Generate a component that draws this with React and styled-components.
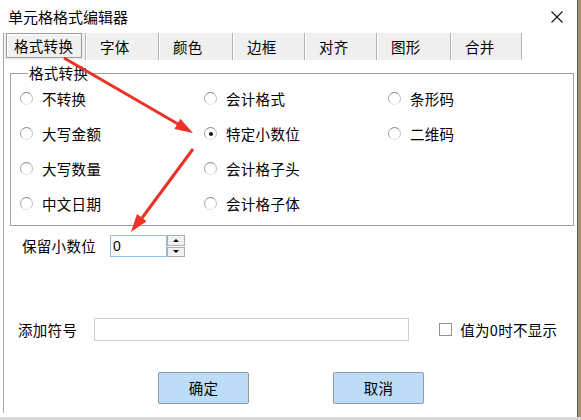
import React from "react";
import styled, { createGlobalStyle } from "styled-components";

const Global = createGlobalStyle`
  html, body { margin: 0; padding: 0; }
  body {
    background: #d6d6d6;
    font-family: "Noto Sans CJK SC", "Noto Sans", sans-serif;
    color: #000;
    width: 581px;
    height: 420px;
    overflow: hidden;
  }
`;

const Window = styled.div`
  position: relative;
  width: 577px;
  height: 417px;
  background: #fff;
  box-shadow: 1px 0 0 #5a5a5a, 4px 0 0 #a8916f;
  display: flex;
  flex-direction: column;
`;

const TitleBar = styled.div`
  height: 33px;
  flex: none;
  display: flex;
  align-items: center;
  justify-content: space-between;
  padding: 0 14px 0 8px;
  font-size: 15px;
  line-height: 16px;
`;

const Close = styled.svg`
  width: 12px;
  height: 12px;
  margin-top: 1px;
`;

const TabArea = styled.div`
  flex: 1;
  margin-left: 3px;
  margin-bottom: 4px;
  border-left: 1px solid #a8a8a8;
  display: flex;
  flex-direction: column;
`;

const TabRow = styled.div`
  height: 27px;
  display: flex;
  align-items: stretch;
`;

const Tab = styled.div`
  width: ${(p) => p.$w}px;
  box-sizing: border-box;
  background: #f0f0f0;
  border-right: 1px solid #b4b4b4;
  margin-right: 1px;
  display: flex;
  align-items: center;
  padding-left: ${(p) => (p.$active ? 0 : 13)}px;
  font-size: 14.5px;
  letter-spacing: 0.3px;
  line-height: 16px;
`;

const ActiveLabel = styled.span`
  margin: 0 3px 0 2px;
  align-self: stretch;
  margin-bottom: 2px;
  flex: 1;
  border: 1px solid #9a9a9a;
  box-shadow: inset 1px 1px 0 #fff;
  display: flex;
  align-items: center;
  padding-left: 7px;
`;

const Content = styled.div`
  flex: 1;
  display: flex;
  flex-direction: column;
`;

const Group = styled.fieldset`
  margin: 5px 3px 0 6px;
  padding: 0 0 4px 10px;
  border: 1px solid #a0a0a0;
  box-shadow: inset 1px 1px 0 #fff;
  display: grid;
  grid-template-columns: 184px 184px 1fr;
  grid-auto-rows: 35px;
`;

const Legend = styled.legend`
  margin-left: 7px;
  padding: 0 1px;
  font-size: 14.5px;
  letter-spacing: 0.3px;
  line-height: 16px;
`;

const RadioItem = styled.label`
  display: flex;
  align-items: center;
  gap: 9px;
  font-size: 14.5px;
  letter-spacing: 0.3px;
  line-height: 16px;
`;

const Circle = styled.span`
  width: 13px;
  height: 13px;
  box-sizing: border-box;
  border-radius: 50%;
  border: 1.5px solid;
  border-color: #8e8e8e #bdbdbd #e2e2e2 #a4a4a4;
  background: #fff;
  display: flex;
  align-items: center;
  justify-content: center;
  flex: none;
  margin-left: -1px;
  &::after {
    content: "";
    width: 4px;
    height: 4px;
    border-radius: 50%;
    background: ${(p) => (p.$on ? "#111" : "transparent")};
  }
`;

const DecimalRow = styled.div`
  display: flex;
  align-items: center;
  margin: 9px 0 0 18px;
  height: 22px;
`;

const FieldLabel = styled.span`
  font-size: 14.5px;
  letter-spacing: 0.3px;
  line-height: 16px;
  margin-right: ${(p) => p.$gap}px;
`;

const NumberBox = styled.div`
  width: 57px;
  height: 22px;
  box-sizing: border-box;
  border: 1px solid #8fc0ec;
  font-family: "Liberation Sans", sans-serif;
  font-size: 14px;
  line-height: 20px;
  padding-left: 2px;
`;

const Spin = styled.div`
  width: 18px;
  height: 22px;
  display: flex;
  flex-direction: column;
  gap: 1px;
`;

const SpinBtn = styled.div`
  flex: 1;
  background: #f0f0f0;
  border: 1px solid #acacac;
  display: flex;
  align-items: center;
  justify-content: center;
  &::after {
    content: "";
    border-left: 3px solid transparent;
    border-right: 3px solid transparent;
    ${(p) => (p.$up ? "border-bottom: 3px solid #000;" : "border-top: 3px solid #000;")}
  }
`;

const SymbolRow = styled.div`
  display: flex;
  align-items: center;
  margin: 61px 0 0 14px;
  height: 23px;
`;

const TextBox = styled.div`
  width: 315px;
  height: 23px;
  box-sizing: border-box;
  border: 1px solid #cfcfcf;
  margin-right: 30px;
`;

const Check = styled.span`
  width: 13px;
  height: 13px;
  box-sizing: border-box;
  border: 1px solid #8f8f8f;
  background: #fff;
  margin-right: 8px;
`;

const ButtonRow = styled.div`
  display: flex;
  margin: 31px 0 0 154px;
  gap: 84px;
`;

const Button = styled.div`
  width: 91px;
  height: 32px;
  box-sizing: border-box;
  background: #bcdcf8;
  border: 1px solid #8e9aa6;
  border-radius: 2px;
  display: flex;
  align-items: center;
  justify-content: center;
  font-size: 14.5px;
  letter-spacing: 0.3px;
  line-height: 16px;
`;

const Annotation = styled.svg`
  position: absolute;
  left: 0;
  top: 0;
  width: 577px;
  height: 417px;
  pointer-events: none;
`;

const tabs = [
  ["格式转换", 82],
  ["字体", 72],
  ["颜色", 73],
  ["边框", 71],
  ["对齐", 71],
  ["图形", 73],
  ["合并", 70],
];

const options = [
  ["不转换", false], ["会计格式", false], ["条形码", false],
  ["大写金额", false], ["特定小数位", true], ["二维码", false],
  ["大写数量", false], ["会计格子头", false], null,
  ["中文日期", false], ["会计格子体", false], null,
];

export default function App() {
  return (
    <>
      <Global />
      <Window>
        <TitleBar>
          <span>单元格格式编辑器</span>
          <Close viewBox="0 0 12 12">
            <path d="M0.5 0.5L11.5 11.5M11.5 0.5L0.5 11.5" stroke="#111" strokeWidth="1.1" />
          </Close>
        </TitleBar>
        <TabArea>
          <TabRow>
            {tabs.map(([t, w], i) => (
              <Tab key={t} $w={w} $active={i === 0}>
                {i === 0 ? <ActiveLabel>{t}</ActiveLabel> : t}
              </Tab>
            ))}
          </TabRow>
          <Content>
            <Group>
              <Legend>格式转换</Legend>
              {options.map((o, i) =>
                o ? (
                  <RadioItem key={i}>
                    <Circle $on={o[1]} />
                    {o[0]}
                  </RadioItem>
                ) : (
                  <span key={i} />
                )
              )}
            </Group>
            <DecimalRow>
              <FieldLabel $gap={14}>保留小数位</FieldLabel>
              <NumberBox>0</NumberBox>
              <Spin>
                <SpinBtn $up />
                <SpinBtn />
              </Spin>
            </DecimalRow>
            <SymbolRow>
              <FieldLabel $gap={17}>添加符号</FieldLabel>
              <TextBox />
              <Check />
              <FieldLabel $gap={0}>值为0时不显示</FieldLabel>
            </SymbolRow>
            <ButtonRow>
              <Button>确定</Button>
              <Button>取消</Button>
            </ButtonRow>
          </Content>
        </TabArea>
        <Annotation viewBox="0 0 577 417">
          <g fill="#ee3124" stroke="#ee3124">
            <line x1="64" y1="58" x2="178" y2="124" strokeWidth="3" />
            <polygon points="193,133 174.4,129.1 180.4,118.7" stroke="none" />
            <line x1="193" y1="149" x2="142" y2="218" strokeWidth="3" />
            <polygon points="131,232 146.6,221.2 137,214" stroke="none" />
          </g>
        </Annotation>
      </Window>
    </>
  );
}
